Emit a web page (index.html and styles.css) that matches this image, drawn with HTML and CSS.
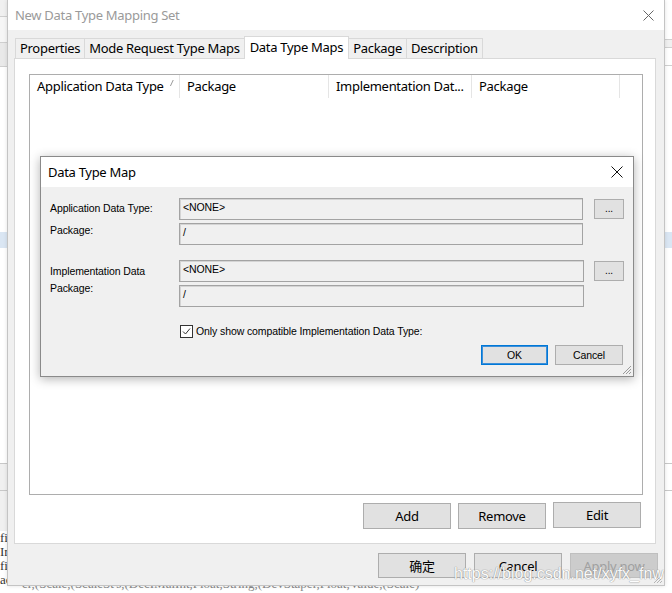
FILE: index.html
```html
<!DOCTYPE html>
<html>
<head>
<meta charset="utf-8">
<link rel="stylesheet" href="styles.css">
</head>
<body>
<div class="desk">
  <div class="top">
    <div class="side side-left">
      <div class="s s1"></div>
      <div class="s s2"></div>
      <div class="s s3"></div>
      <div class="s s4"></div>
      <div class="s sblue"></div>
      <div class="s s5"></div>
      <div class="s s6"></div>
      <div class="s s7"></div>
      <div class="s-text">
        <div>fi</div>
        <div>Ir</div>
        <div>fi</div>
        <div>ac</div>
      </div>
    </div>
    <div class="win">
      <div class="win-title">
        <span>New Data Type Mapping Set</span>
        <svg class="x-outer" width="11" height="11" viewBox="0 0 11 11"><path d="M0.5 0.5L10.5 10.5M10.5 0.5L0.5 10.5" stroke="#666" stroke-width="1" fill="none"/></svg>
      </div>
      <div class="win-body">
        <div class="tabs">
          <div class="tab">Properties</div>
          <div class="tab">Mode Request Type Maps</div>
          <div class="tab on">Data Type Maps</div>
          <div class="tab">Package</div>
          <div class="tab last">Description</div>
        </div>
        <div class="panel">
          <div class="list">
            <div class="list-head">
              <div class="col c1">Application Data Type<span class="sort"></span></div>
              <div class="col c2">Package</div>
              <div class="col c3">Implementation Dat...</div>
              <div class="col c4">Package</div>
            </div>
          </div>
          <div class="btns">
            <div class="btn">Add</div>
            <div class="btn">Remove</div>
            <div class="btn edit">Edit</div>
          </div>
        </div>
        <div class="foot">
          <div class="btn cjk">确定</div>
          <div class="btn">Cancel</div>
          <div class="btn off">Apply now</div>
        </div>
      </div>
      <svg class="grip grip-win" width="10" height="10" viewBox="0 0 10 10"><path d="M9 1L1 9M9 4L4 9M9 7L7 9" stroke="#b5b5b5" stroke-width="1" fill="none"/></svg>
    </div>
    <div class="side side-right">
      <div class="s r1"></div>
      <div class="s r2"></div>
      <div class="s r3"></div>
      <div class="s r4"></div>
      <div class="s sblue"></div>
      <div class="s r5"></div>
      <div class="s r6"></div>
      <div class="s r7"></div>
    </div>
  </div>
  <div class="under"><span>er,(Scale,(ScaleSt's,(DecIMalInt,Float,String,(DevStaper,Float,Value,(Scale)</span></div>

  <div class="dlg">
    <div class="dlg-title">
      <span>Data Type Map</span>
      <svg width="12" height="12" viewBox="0 0 12 12"><path d="M0.5 0.5L11.5 11.5M11.5 0.5L0.5 11.5" stroke="#111" stroke-width="1" fill="none"/></svg>
    </div>
    <div class="dlg-body">
      <div class="grp">
        <div class="lbl l1">Application Data Type:</div>
        <div class="fld">&lt;NONE&gt;</div>
        <div class="dots">...</div>
        <div class="lbl l2">Package:</div>
        <div class="fld">/</div>
        <div></div>
      </div>
      <div class="grp">
        <div class="lbl l3">Implementation Data</div>
        <div class="fld wide">&lt;NONE&gt;</div>
        <div class="dots">...</div>
        <div class="lbl l4">Package:</div>
        <div class="fld wide">/</div>
        <div></div>
      </div>
      <div class="chk-row">
        <svg class="chk" width="13" height="13" viewBox="0 0 13 13"><rect x="0.5" y="0.5" width="12" height="12" fill="#fff" stroke="#333"/><path d="M3 6.5L5.5 9L10 3.5" stroke="#333" stroke-width="1" fill="none"/></svg>
        <span>Only show compatible Implementation Data Type:</span>
      </div>
      <div class="dlg-btns">
        <div class="dbtn ok">OK</div>
        <div class="dbtn cancel">Cancel</div>
      </div>
    </div>
    <svg class="grip grip-dlg" width="10" height="10" viewBox="0 0 10 10"><path d="M9 1L1 9M9 4L4 9M9 7L7 9" stroke="#9a9a9a" stroke-width="1" fill="none"/></svg>
  </div>

  <div class="watermark">https://blog.csdn.net/xyfx_fnw</div>
</div>
</body>
</html>
```

FILE: styles.css
```css
html, body {
  margin: 0;
  padding: 0;
}
body {
  width: 672px;
  height: 593px;
  overflow: hidden;
  background: #ffffff;
  font-family: "Noto Sans", "Liberation Sans", sans-serif;
  color: #000;
  letter-spacing: -0.3px;
}
.desk {
  position: relative;
  width: 672px;
  height: 593px;
  display: flex;
  flex-direction: column;
}
.top {
  display: flex;
  height: 586px;
  flex: none;
}
.side {
  width: 7px;
  flex: none;
  display: flex;
  flex-direction: column;
  overflow: hidden;
  background: #fff;
}
.s { flex: none; box-sizing: border-box; }
.s1 { height: 17px; background: #f0f0f0; border-bottom: 1px solid #cfcfcf; }
.s2 { height: 26px; background: #f6f6f6; border-bottom: 1px solid #cfcfcf; }
.s3 { height: 24px; background: #e9e9e9; border-bottom: 1px solid #cfcfcf; }
.s4 { height: 165px; background: #fff; }
.sblue { height: 16px; background: #dae6f3; }
.s5 { height: 216px; background: #fff; border-bottom: 1px solid #c8c8c8; }
.s6 { height: 27px; background: #f0f0f0; border-bottom: 1px solid #c8c8c8; }
.s7 { height: 40px; background: #f0f0f0; }
.s-text {
  font-family: "Liberation Serif", serif;
  font-size: 13px;
  line-height: 14px;
  color: #333;
  background: #fff;
  white-space: nowrap;
  letter-spacing: 0;
}
.r1 { height: 40px; background: #fff; border-bottom: 1px solid #d0d0d0; }
.r2 { height: 8px; background: #f0f0f0; border-bottom: 1px solid #d0d0d0; }
.r3 { height: 18px; background: #fff; border-bottom: 1px solid #d0d0d0; }
.r4 { height: 166px; background: #fff; }
.r5 { height: 216px; background: #fff; border-bottom: 1px solid #c8c8c8; }
.r6 { height: 27px; background: #fff; border-bottom: 1px solid #c8c8c8; }
.r7 { height: 90px; background: #fff; }

.win {
  width: 658px;
  flex: none;
  box-sizing: border-box;
  border-left: 1px solid #c4c4c4;
  border-right: 1px solid #c4c4c4;
  border-bottom: 1px solid #c4c4c4;
  background: #f0f0f0;
  display: flex;
  flex-direction: column;
  position: relative;
  box-shadow: 0 0 4px rgba(0,0,0,0.12);
}
.win-title {
  height: 30px;
  flex: none;
  background: #fff;
  display: flex;
  align-items: center;
  justify-content: space-between;
  padding: 0 10px 0 7px;
  color: #9a9a9a;
  font-size: 13px;
}
.win-body {
  flex: 1;
  display: flex;
  flex-direction: column;
  padding: 6px 8px 0 6px;
}
.tabs {
  display: flex;
  align-items: flex-end;
  height: 22px;
  padding-left: 1px;
  position: relative;
  z-index: 1;
  flex: none;
}
.tab {
  height: 20px;
  box-sizing: border-box;
  border: 1px solid #d9d9d9;
  border-bottom: none;
  border-right: none;
  padding: 0 4px;
  font-size: 13px;
  line-height: 18px;
  background: #f0f0f0;
  white-space: nowrap;
}
.tab.last { border-right: 1px solid #d9d9d9; }
.tab.on {
  height: 23px;
  background: #fff;
  border-right: 1px solid #d9d9d9;
  margin-bottom: -1px;
  padding: 0 5px;
  line-height: 20px;
}
.tab.on + .tab { border-left: none; }
.panel {
  flex: none;
  height: 486px;
  box-sizing: border-box;
  border: 1px solid #d9d9d9;
  background: #fff;
  padding: 15px 12px 0 14px;
  display: flex;
  flex-direction: column;
}
.list {
  height: 421px;
  flex: none;
  box-sizing: border-box;
  border: 1px solid #adadad;
}
.list-head {
  display: flex;
  height: 23px;
}
.col {
  box-sizing: border-box;
  padding-left: 7px;
  font-size: 13px;
  line-height: 23px;
  white-space: nowrap;
  overflow: hidden;
  border-right: 1px solid #e5e5e5;
  flex: none;
}
.c1 { width: 150px; }
.c2 { width: 149px; }
.c3 { width: 143px; }
.c4 { width: 148px; }
.sort {
  display: inline-block;
  width: 3px;
  height: 6px;
  margin-left: 2px;
  border-right: 1px solid #9a9a9a;
  transform: skewX(-25deg) translateY(-5px);
}
.btns {
  display: flex;
  justify-content: flex-end;
  gap: 7px;
  margin-top: 8px;
  padding-right: 2px;
}
.btn {
  width: 88px;
  height: 26px;
  box-sizing: border-box;
  border: 1px solid #adadad;
  background: #e1e1e1;
  font-size: 13px;
  display: flex;
  align-items: center;
  justify-content: center;
  flex: none;
}
.btn.edit { margin-top: -1px; }
.foot {
  display: flex;
  justify-content: flex-end;
  gap: 8px;
  margin-top: 9px;
  margin-right: -2px;
}
.foot .btn { height: 25px; }
.btn.cjk { font-family: "Noto Sans CJK SC", sans-serif; }
.btn.off {
  background: #cccccc;
  border-color: #bfbfbf;
  color: #a0a0a0;
}
.grip { position: absolute; right: 1px; bottom: 1px; }

.under {
  height: 7px;
  overflow: hidden;
  background: #fff;
  font-family: "Liberation Serif", serif;
  font-size: 13px;
  line-height: 14px;
  color: #888;
  white-space: nowrap;
  letter-spacing: 0;
  padding-left: 22px;
}
.under span {
  display: block;
  margin-top: -9px;
}

.dlg {
  position: absolute;
  left: 40px;
  top: 156px;
  width: 594px;
  height: 221px;
  box-sizing: border-box;
  border: 1px solid #8a8a8a;
  background: #f0f0f0;
  box-shadow: 0 2px 10px rgba(0,0,0,0.3);
  font-family: "Liberation Sans", sans-serif;
  letter-spacing: -0.1px;
  z-index: 5;
}
.dlg-title {
  height: 30px;
  background: #fff;
  display: flex;
  align-items: center;
  justify-content: space-between;
  padding: 0 10px 0 7px;
  font-size: 13px;
  font-family: "Noto Sans", sans-serif;
  letter-spacing: -0.3px;
}
.dlg-body {
  padding: 11px 9px 0 9px;
}
.grp {
  display: grid;
  grid-template-columns: 129px 404px 41px;
  grid-auto-rows: 22px;
  row-gap: 3px;
}
.grp + .grp { margin-top: 15px; }
.lbl {
  font-size: 10.5px;
  line-height: 14px;
  align-self: start;
  white-space: nowrap;
}
.l1 { margin-top: 3px; }
.l2 { margin-top: 0; }
.l3 { margin-top: 4px; }
.l4 { margin-top: -4px; }
.fld {
  box-sizing: border-box;
  border: 1px solid #a3a3a3;
  box-shadow: inset 1px 1px 0 #d4d4d4;
  background: #f0f0f0;
  padding: 1px 3px;
  font-size: 10.5px;
  line-height: 14px;
}
.fld.wide { margin-right: -1px; }
.dots {
  justify-self: end;
  align-self: center;
  width: 30px;
  height: 20px;
  box-sizing: border-box;
  border: 1px solid #adadad;
  background: #e1e1e1;
  font-size: 10px;
  line-height: 17px;
  text-align: center;
}
.chk-row {
  display: flex;
  align-items: center;
  gap: 3px;
  margin: 18px 0 0 130px;
  font-size: 10.5px;
  height: 13px;
}
.chk-row span { margin-top: -2px; }
.chk { flex: none; }
.dlg-btns {
  display: flex;
  justify-content: flex-end;
  gap: 7px;
  margin-top: 7px;
  padding-right: 1px;
}
.dbtn {
  height: 20px;
  box-sizing: border-box;
  border: 1px solid #adadad;
  background: #e1e1e1;
  font-size: 10.5px;
  display: flex;
  align-items: center;
  justify-content: center;
}
.dbtn.ok { width: 67px; border-color: #0078d7; box-shadow: inset 0 0 0 1px #3c8fd9; }
.dbtn.cancel { width: 68px; }

.watermark {
  position: absolute;
  left: 454px;
  top: 565px;
  font-family: "Liberation Sans", sans-serif;
  font-size: 16px;
  letter-spacing: 0;
  color: #fff;
  text-shadow: 0 0 1px #8a8a8a, 0 0 1px #8a8a8a;
  white-space: nowrap;
  z-index: 6;
  opacity: 0.9;
}
```
